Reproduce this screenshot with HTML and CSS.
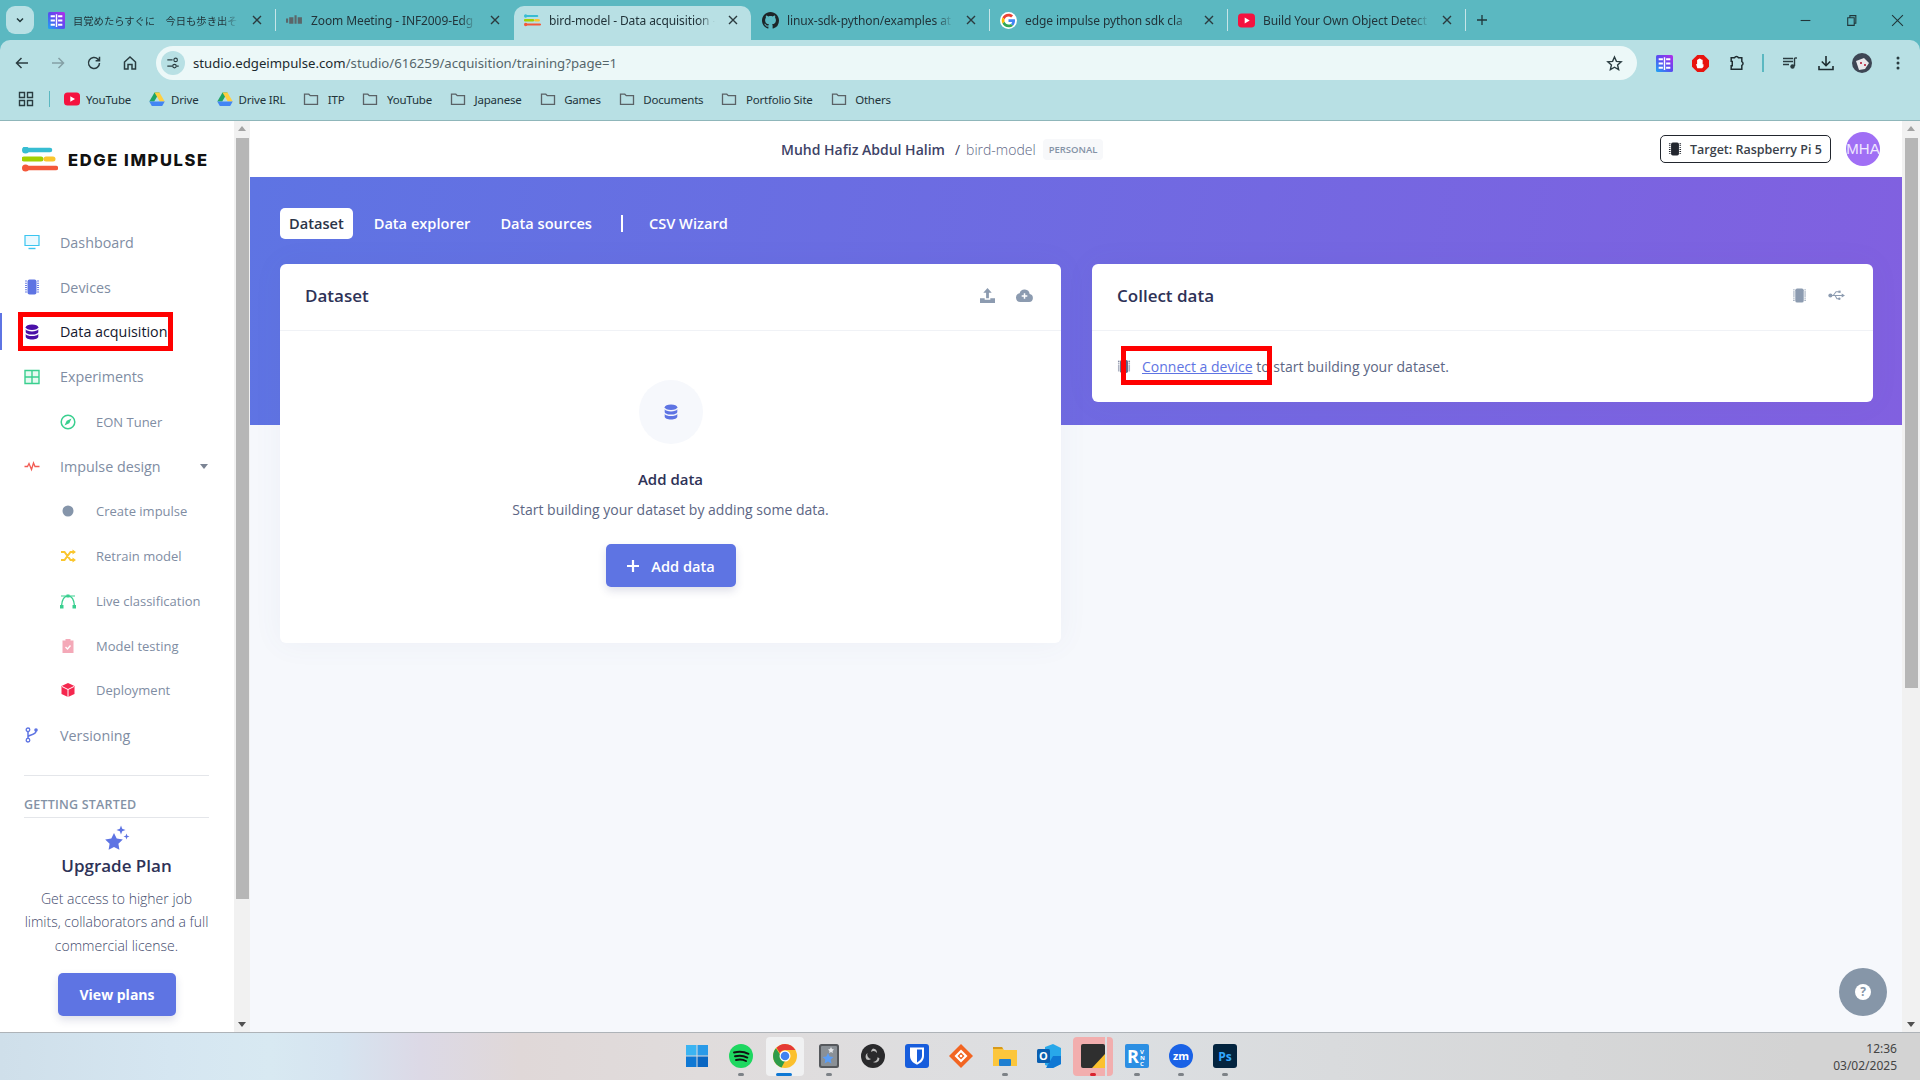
FILE: index.html
```html
<!DOCTYPE html>
<html lang="en">
<head>
    <meta charset="UTF-8">
    <meta name="viewport" content="width=device-width, initial-scale=1.0">
    <title>bird-model - Data acquisition - Edge Impulse</title>
    <link rel="stylesheet" href="styles.css">
</head>
<body>
<svg class="defs" aria-hidden="true">
    <defs>
        <linearGradient id="appgrad" x1="0" y1="1" x2="1" y2="0">
            <stop offset="0" stop-color="#1ea7f5"/>
            <stop offset="0.5" stop-color="#5a4cf0"/>
            <stop offset="1" stop-color="#b52bea"/>
        </linearGradient>
        <symbol id="i-app" viewBox="0 0 16 16">
            <rect width="16" height="16" rx="1.5" fill="url(#appgrad)"/>
            <path d="M2.5 3h4v2h-4zM2.5 7h4v2h-4zM2.5 11h4v2h-4zM9.500 3h4v2h-4zM9.500 7h4v2h-4zM9.500 11h4v2h-4zM7.300 2h1.400v12H7.300z" fill="#fff"/>
        </symbol>
        <symbol id="i-logo" viewBox="0 0 36 25">
            <path d="M3.500 3H28" stroke="#37bdd2" stroke-width="4.500" stroke-linecap="round"/>
            <circle cx="3.500" cy="3" r="3.500" fill="#37bdd2"/>
            <path d="M2 12h17" stroke="#a2d000" stroke-width="5" stroke-linecap="round"/>
            <path d="M24 12h7" stroke="#fac62d" stroke-width="5" stroke-linecap="round"/>
            <path d="M3.500 21H34" stroke="#f4583a" stroke-width="4.500" stroke-linecap="round"/>
            <circle cx="3.500" cy="21" r="3.500" fill="#f4583a"/>
        </symbol>
        <symbol id="i-chip" viewBox="0 0 16 16">
            <rect x="3.500" y="0.500" width="9" height="15" rx="2" fill="currentColor"/>
            <path d="M2 1.500v13M14 1.500v13" stroke="currentColor" stroke-width="1.800" stroke-dasharray="1 1.200" fill="none"/>
        </symbol>
        <symbol id="i-db" viewBox="0 0 16 16">
            <ellipse cx="8" cy="3.200" rx="6.300" ry="2.800" fill="currentColor"/>
            <path d="M1.700 5.300c.8 1.300 3.300 2.200 6.300 2.200s5.500-.9 6.300-2.200v2.600c0 1.500-2.800 2.600-6.300 2.600s-6.300-1.100-6.300-2.600zM1.700 9.900c.8 1.300 3.300 2.200 6.300 2.200s5.500-.9 6.300-2.200v2.800c0 1.500-2.800 2.700-6.300 2.700s-6.300-1.200-6.300-2.700z" fill="currentColor"/>
        </symbol>
        <symbol id="i-folder" viewBox="0 0 16 16">
            <path d="M1.500 3.200h4.300l1.500 1.500h7.200v8.600h-13z" fill="none" stroke="#5a6266" stroke-width="1.300"/>
        </symbol>
        <symbol id="i-yt" viewBox="0 0 16 16">
            <rect y="1.500" width="16" height="13" rx="3.500" fill="#f5123f"/>
            <path d="M6.300 5.200 11 8l-4.700 2.800z" fill="#fff"/>
        </symbol>
        <symbol id="i-drive" viewBox="0 0 16 16">
            <path d="M5.500 1.500h5L5.200 10.500H.3z" fill="#1fa463"/>
            <path d="M10.500 1.500 15.700 10.500H10.800L5.500 1.500z" fill="#ffcf3f"/>
            <path d="M3 10.500h12.700L13.200 15H2.800L.3 10.500z" fill="#4285f4"/>
        </symbol>
        <symbol id="i-close" viewBox="0 0 12 12">
            <path d="M2 2l8 8M10 2l-8 8" stroke="#2b3a3e" stroke-width="1.400" fill="none"/>
        </symbol>
    </defs>
</svg>

<div class="screen">
    <header class="browser">
        <div class="tabstrip">
            <div class="tab-list"><svg viewBox="0 0 12 12"><path d="M3 4.500l3 3 3-3" fill="none" stroke="#20363a" stroke-width="1.500"/></svg></div>
            <div class="tab">
                <svg class="favicon"><use href="#i-app"/></svg>
                <span class="tab-title cjk">目覚めたらすぐに　今日も歩き出そ</span>
                <svg class="tab-close"><use href="#i-close"/></svg>
            </div>
            <span class="tab-sep"></span>
            <div class="tab">
                <svg class="favicon" viewBox="0 0 16 16"><path d="M0 6h2v4H0zM3 5h4v6H3zM8 3h2v8H8zM11 5h4v6h-4z" fill="#5b6669"/></svg>
                <span class="tab-title">Zoom Meeting - INF2009-Edg</span>
                <svg class="tab-close"><use href="#i-close"/></svg>
            </div>
            <span class="tab-sep off"></span>
            <div class="tab active">
                <svg class="favicon"><use href="#i-logo"/></svg>
                <span class="tab-title">bird-model - Data acquisition -</span>
                <svg class="tab-close"><use href="#i-close"/></svg>
            </div>
            <span class="tab-sep off"></span>
            <div class="tab">
                <svg class="favicon" viewBox="0 0 16 16"><path fill="#1d2528" d="M8 0C3.580 0 0 3.580 0 8c0 3.540 2.290 6.530 5.470 7.590.4.070.55-.17.55-.38 0-.19-.01-.82-.01-1.490-2.010.37-2.530-.49-2.690-.94-.09-.23-.48-.94-.82-1.130-.28-.15-.68-.52-.01-.53.63-.01 1.080.58 1.230.82.72 1.210 1.870.87 2.330.66.07-.52.28-.87.51-1.070-1.780-.2-3.640-.89-3.640-3.950 0-.87.31-1.590.82-2.150-.08-.2-.36-1.020.08-2.120 0 0 .67-.21 2.200.82.64-.18 1.320-.27 2-.27.68 0 1.360.09 2 .27 1.530-1.040 2.200-.82 2.200-.82.44 1.100.16 1.920.08 2.120.51.56.82 1.270.82 2.150 0 3.070-1.870 3.750-3.650 3.950.29.25.54.73.54 1.480 0 1.070-.01 1.930-.01 2.200 0 .21.15.46.55.38A8.013 8.013 0 0016 8c0-4.420-3.580-8-8-8z"/></svg>
                <span class="tab-title">linux-sdk-python/examples at</span>
                <svg class="tab-close"><use href="#i-close"/></svg>
            </div>
            <span class="tab-sep"></span>
            <div class="tab">
                <svg class="favicon" viewBox="-6 -6 60 60">
                    <circle cx="24" cy="24" r="30" fill="#fff"/>
                    <path fill="#EA4335" d="M24 9.500c3.540 0 6.710 1.220 9.210 3.600l6.850-6.850C35.900 2.380 30.470 0 24 0 14.620 0 6.510 5.380 2.560 13.220l7.980 6.190C12.430 13.720 17.740 9.500 24 9.500z"/>
                    <path fill="#4285F4" d="M46.980 24.550c0-1.570-.15-3.090-.38-4.550H24v9.020h12.940c-.58 2.960-2.260 5.480-4.780 7.180l7.730 6c4.510-4.180 7.090-10.360 7.090-17.650z"/>
                    <path fill="#FBBC05" d="M10.530 28.590c-.48-1.450-.76-2.990-.76-4.590s.27-3.140.76-4.590l-7.980-6.190C.92 16.460 0 20.120 0 24c0 3.880.92 7.540 2.560 10.780l7.970-6.190z"/>
                    <path fill="#34A853" d="M24 48c6.480 0 11.930-2.130 15.890-5.810l-7.730-6c-2.150 1.450-4.920 2.300-8.160 2.300-6.260 0-11.570-4.220-13.470-9.910l-7.980 6.190C6.510 42.620 14.620 48 24 48z"/>
                </svg>
                <span class="tab-title">edge impulse python sdk cla</span>
                <svg class="tab-close"><use href="#i-close"/></svg>
            </div>
            <span class="tab-sep"></span>
            <div class="tab">
                <svg class="favicon"><use href="#i-yt"/></svg>
                <span class="tab-title">Build Your Own Object Detect</span>
                <svg class="tab-close"><use href="#i-close"/></svg>
            </div>
            <span class="tab-sep"></span>
            <svg class="new-tab" viewBox="0 0 12 12"><path d="M6 1v10M1 6h10" stroke="#20363a" stroke-width="1.300"/></svg>
            <div class="win-controls">
                <span class="win-btn"><svg viewBox="0 0 12 12"><path d="M1.500 6h9" stroke="#20363a"/></svg></span>
                <span class="win-btn"><svg viewBox="0 0 12 12"><path d="M2.500 3.500h6v7h-6zM4.500 3.500v-2h5.500v7H8.500" fill="none" stroke="#20363a"/></svg></span>
                <span class="win-btn"><svg viewBox="0 0 12 12"><path d="M1 1l10 10M11 1L1 11" stroke="#20363a"/></svg></span>
            </div>
        </div>

        <div class="toolbar">
            <span class="tb-btn"><svg viewBox="0 0 16 16"><path d="M14 8H3M7.500 3 2.500 8l5 5" fill="none" stroke="#2a3c40" stroke-width="1.500"/></svg></span>
            <span class="tb-btn"><svg viewBox="0 0 16 16"><path d="M2 8h11M8.500 3l5 5-5 5" fill="none" stroke="#84a0a5" stroke-width="1.500"/></svg></span>
            <span class="tb-btn"><svg viewBox="0 0 16 16"><path d="M13.500 8a5.500 5.500 0 1 1-1.600-3.900L13.500 5.700M13.500 1.800v3.900H9.600" fill="none" stroke="#2a3c40" stroke-width="1.500"/></svg></span>
            <span class="tb-btn"><svg viewBox="0 0 16 16"><path d="M2.500 7 8 2l5.500 5v7H10V9.500H6V14H2.500z" fill="none" stroke="#2a3c40" stroke-width="1.500"/></svg></span>
            <div class="omnibox">
                <span class="site-info"><svg viewBox="0 0 16 16"><path d="M1.500 4.500h6M12 11.500h2.500M1.500 11.500h6" stroke="#2a3c40" stroke-width="1.300"/><circle cx="11" cy="4.500" r="2" fill="none" stroke="#2a3c40" stroke-width="1.300"/><circle cx="9.700" cy="11.500" r="2" fill="none" stroke="#2a3c40" stroke-width="1.300"/></svg></span>
                <span class="url"><span class="host">studio.edgeimpulse.com</span>/studio/616259/acquisition/training?page=1</span>
                <svg class="star" viewBox="0 0 16 16"><path d="M8 1.800 9.800 6l4.500.4-3.400 3 1 4.400L8 11.500l-3.900 2.300 1-4.400-3.400-3L6.200 6z" fill="none" stroke="#2a3c40" stroke-width="1.300"/></svg>
            </div>
            <span class="tb-btn first-ext"><svg class="ext"><use href="#i-app"/></svg></span>
            <span class="tb-btn"><svg class="ext" viewBox="0 0 16 16"><path d="M5 0h6l5 5v6l-5 5H5l-5-5V5z" fill="#e8140f"/><path d="M5 12.500 3.800 8.500l1 .2V4.500h1V3.800h1v-.5h1v.5h1v.7h1.200v4.300h.8v2.200l-1.300 1.500z" fill="#fff"/></svg></span>
            <span class="tb-btn"><svg class="ext" viewBox="0 0 16 16"><path d="M3 2.500h3.200a2 2 0 0 1 3.600 0H13v3.700a2 2 0 0 1 0 3.600V13.500H3v-3.300h1V6H3z" fill="none" stroke="#1e2c30" stroke-width="1.400"/></svg></span>
            <span class="tb-sep"></span>
            <span class="tb-btn"><svg viewBox="0 0 16 16"><path d="M1 3.500h10M1 6.500h10M1 9.500h6" stroke="#2a3c40" stroke-width="1.400"/><path d="M12.500 3v8" stroke="#2a3c40" stroke-width="1.400"/><path d="M12.500 3H15" stroke="#2a3c40" stroke-width="1.400"/><circle cx="10.500" cy="11.500" r="2.200" fill="#2a3c40"/></svg></span>
            <span class="tb-btn"><svg viewBox="0 0 16 16"><path d="M8 1v9.500M3.800 6.500 8 10.700l4.200-4.200M1 11v3.500h14V11" fill="none" stroke="#1e2c30" stroke-width="1.600"/></svg></span>
            <span class="tb-btn"><svg class="avatar-chrome" viewBox="0 0 20 20"><circle cx="10" cy="10" r="10" fill="#3d4654"/><path d="M4 8l8-3 5 5-4 6-6 1z" fill="#e9e9ec"/><path d="M8 9h2v2H8zM12 11h2v2h-2z" fill="#c0455b"/></svg></span>
            <span class="tb-btn"><svg viewBox="0 0 16 16"><circle cx="8" cy="3" r="1.500" fill="#2a3c40"/><circle cx="8" cy="8" r="1.500" fill="#2a3c40"/><circle cx="8" cy="13" r="1.500" fill="#2a3c40"/></svg></span>
        </div>

        <nav class="bookmarks">
            <svg class="apps" viewBox="0 0 16 16"><path d="M1.500 1.500h5v5h-5zM9.500 1.500h5v5h-5zM1.500 9.500h5v5h-5zM9.500 9.500h5v5h-5z" fill="none" stroke="#2a3c40" stroke-width="1.400"/></svg>
            <span class="bm-sep"></span>
            <a class="bookmark site"><svg><use href="#i-yt"/></svg>YouTube</a>
            <a class="bookmark site"><svg><use href="#i-drive"/></svg>Drive</a>
            <a class="bookmark site"><svg><use href="#i-drive"/></svg>Drive IRL</a>
            <a class="bookmark"><svg><use href="#i-folder"/></svg>ITP</a>
            <a class="bookmark"><svg><use href="#i-folder"/></svg>YouTube</a>
            <a class="bookmark"><svg><use href="#i-folder"/></svg>Japanese</a>
            <a class="bookmark"><svg><use href="#i-folder"/></svg>Games</a>
            <a class="bookmark"><svg><use href="#i-folder"/></svg>Documents</a>
            <a class="bookmark"><svg><use href="#i-folder"/></svg>Portfolio Site</a>
            <a class="bookmark"><svg><use href="#i-folder"/></svg>Others</a>
        </nav>
    </header>

    <div class="page">
        <aside class="sidebar">
            <div class="brand">
                <svg class="brand-logo"><use href="#i-logo"/></svg>
                <span class="brand-name">EDGE IMPULSE</span>
            </div>
            <ul class="nav">
                <li class="nav-item"><svg viewBox="0 0 16 16"><path d="M1 1.500h14v10H1z" fill="#eaf9ff" stroke="#3bc5f0" stroke-width="1.200"/><path d="M4.500 14.500h7" stroke="#3bc5f0" stroke-width="1.400"/></svg>Dashboard</li>
                <li class="nav-item"><svg class="chip-blue"><use href="#i-chip"/></svg>Devices</li>
                <li class="nav-item current"><svg class="db-purple"><use href="#i-db"/></svg>Data acquisition</li>
                <li class="nav-item"><svg viewBox="0 0 16 16"><path d="M1 1.500h14v13H1zM8 1.500v13M1 8h14" fill="#e6faf1" stroke="#39cf8f" stroke-width="1.400"/></svg>Experiments</li>
                <li class="nav-item sub"><svg viewBox="0 0 16 16"><circle cx="8" cy="8" r="6.800" fill="none" stroke="#39cf8f" stroke-width="1.500"/><path d="M11.500 4.500 9.300 9.300 4.500 11.500 6.700 6.700z" fill="#39cf8f"/></svg>EON Tuner</li>
                <li class="nav-item"><svg viewBox="0 0 16 16"><path d="M0.500 8.500h3l1.500-3 2.500 6 2-6.500 1.500 3.500h4.500" fill="none" stroke="#f25c54" stroke-width="1.300"/></svg>Impulse design<span class="caret"></span></li>
                <li class="nav-item sub"><svg viewBox="0 0 16 16"><circle cx="8" cy="8" r="5.500" fill="#8595aa"/></svg>Create impulse</li>
                <li class="nav-item sub"><svg viewBox="0 0 16 16"><path d="M1 4h3.500l6 8H13M1 12h3.500l6-8H13" fill="none" stroke="#fac62d" stroke-width="2"/><path d="M12.500 1.500 16 4l-3.500 2.500zM12.500 9.500 16 12l-3.500 2.500z" fill="#fac62d"/></svg>Retrain model</li>
                <li class="nav-item sub"><svg viewBox="0 0 16 16"><path d="M1.500 13C2 6 5 3 8 3s6 3 6.500 10" fill="none" stroke="#39cf8f" stroke-width="1.300"/><path d="M0 12h3.500v3.500H0zM12.500 12H16v3.500h-3.500zM6.500 1.500h3v3h-3z" fill="#39cf8f"/><path d="M1 3h14" stroke="#39cf8f" stroke-width="1"/></svg>Live classification</li>
                <li class="nav-item sub"><svg viewBox="0 0 16 16"><path d="M2.500 2.500H5.500V1h5v1.500h3V15h-11z" fill="#f4a9b8"/><path d="M5.500 9l2 2 3-3.500" fill="none" stroke="#fff" stroke-width="1.400"/></svg>Model testing</li>
                <li class="nav-item sub"><svg viewBox="0 0 16 16"><path d="M8 1l6.500 3v8L8 15l-6.500-3V4z" fill="#f5274e"/><path d="M2 4.500l6 3 6-3M8 7.500V15" fill="none" stroke="#fff" stroke-width="1"/></svg>Deployment</li>
                <li class="nav-item"><svg viewBox="0 0 16 16"><path d="M4 3v10M4 10c0-2.500 8-1.500 8-6" fill="none" stroke="#5e74e3" stroke-width="1.500"/><circle cx="4" cy="2.800" r="1.800" fill="#fff" stroke="#5e74e3" stroke-width="1.300"/><circle cx="4" cy="13.200" r="1.800" fill="#fff" stroke="#5e74e3" stroke-width="1.300"/><circle cx="12" cy="3" r="1.800" fill="#5e74e3"/></svg>Versioning</li>
            </ul>
            <div class="started">
                <h6>GETTING STARTED</h6>
                <svg class="sparkle" viewBox="0 0 26 26"><path d="M10 8l2.700 5.600 6.100.8-4.400 4.300 1 6.100L10 22l-5.400 2.800 1-6.100L1.200 14.400l6.100-.8z" fill="#5e74e3"/><path d="M17 .5l1.200 3.300 3.300 1.200-3.300 1.200L17 9.500l-1.200-3.300L12.500 5l3.300-1.200zM22.500 8.500l.8 2.200 2.200.8-2.200.8-.8 2.200-.8-2.200-2.200-.8 2.200-.8z" fill="#5e74e3"/></svg>
                <h4>Upgrade Plan</h4>
                <p>Get access to higher job<br>limits, collaborators and a full<br>commercial license.</p>
                <a class="btn-plans">View plans</a>
            </div>
        </aside>
        <div class="scrollbar side">
            <span class="arrow up"></span>
            <span class="thumb"></span>
            <span class="arrow down"></span>
        </div>

        <main class="content">
            <div class="topbar">
                <span class="owner">Muhd Hafiz Abdul Halim</span>
                <span class="slash">/</span>
                <span class="project">bird-model</span>
                <span class="pill">PERSONAL</span>
                <span class="target"><svg><use href="#i-chip"/></svg>Target: Raspberry Pi 5</span>
                <span class="avatar">MHA</span>
            </div>
            <section class="hero">
                <div class="subnav">
                    <a class="subnav-link on">Dataset</a>
                    <a class="subnav-link">Data explorer</a>
                    <a class="subnav-link">Data sources</a>
                    <span class="subnav-sep"></span>
                    <a class="subnav-link">CSV Wizard</a>
                </div>
                <div class="cards">
                    <div class="card">
                        <div class="card-head">
                            <h3>Dataset</h3>
                            <div class="card-tools">
                                <svg viewBox="0 0 16 16"><path d="M8 0l4.500 5H9.500v6h-3V5H3.500zM0 11h5v1.500h6V11h5v5H0z"/></svg>
                                <svg viewBox="0 0 18 16"><path d="M14.500 6.500a5.500 5.500 0 0 0-10.700-1A4.800 4.800 0 0 0 4.500 15h9.500a4.300 4.300 0 0 0 .5-8.500z"/><path d="M9 5.500v6M6 8.500h6" stroke="#fff" stroke-width="1.600"/></svg>
                            </div>
                        </div>
                        <div class="empty">
                            <span class="empty-icon"><svg><use href="#i-db"/></svg></span>
                            <h4>Add data</h4>
                            <p>Start building your dataset by adding some data.</p>
                            <a class="btn-add"><svg viewBox="0 0 14 14"><path d="M7 1v12M1 7h12" stroke="#fff" stroke-width="2.200"/></svg>Add data</a>
                        </div>
                    </div>
                    <div class="card">
                        <div class="card-head">
                            <h3>Collect data</h3>
                            <div class="card-tools">
                                <svg><use href="#i-chip"/></svg>
                                <svg viewBox="0 0 18 16"><circle cx="2.500" cy="8" r="2.200"/><path d="M2.500 8h12.500M5.500 8l3-4h3M7.500 8l2 3.500h2" fill="none" stroke="#8c9bb0" stroke-width="1.100"/><path d="M14.500 5.800 18 8l-3.500 2.200z"/><rect x="11" y="2.800" width="2.400" height="2.400"/><circle cx="12" cy="11.500" r="1.300"/></svg>
                            </div>
                        </div>
                        <div class="connect">
                            <svg><use href="#i-chip"/></svg>
                            <span><a class="link">Connect a device</a> to start building your dataset.</span>
                        </div>
                    </div>
                </div>
            </section>
            <span class="help"><svg viewBox="0 0 16 16"><circle cx="8" cy="8" r="8" fill="#fff"/><text x="8" y="12" class="help-mark">?</text></svg></span>
        </main>
        <div class="scrollbar main">
            <span class="arrow up"></span>
            <span class="thumb"></span>
            <span class="arrow down"></span>
        </div>
    </div>

    <footer class="taskbar">
        <div class="task-icons">
            <span class="task"><svg viewBox="0 0 24 24"><path d="M1 1h10.500v10.500H1z" fill="#3bb4f2"/><path d="M12.500 1H23v10.500H12.500z" fill="#2a9ae8"/><path d="M1 12.500h10.500V23H1z" fill="#0f78d4"/><path d="M12.500 12.500H23V23H12.500z" fill="#0a66c2"/></svg></span>
            <span class="task open"><svg viewBox="0 0 24 24"><circle cx="12" cy="12" r="12" fill="#1ed760"/><path d="M5 8.500c5-1.300 10-1 14.500 1.300M6 12.300c4.300-1 8.600-.7 12.300 1.300M7 16c3.500-.8 7-.6 10 1" fill="none" stroke="#111" stroke-width="1.900" stroke-linecap="round"/></svg></span>
            <span class="task open running"><svg viewBox="0 0 24 24"><circle cx="12" cy="12" r="12" fill="#fbc02d"/><path d="M12 0a12 12 0 0 1 10.400 6H12a6 6 0 0 0-5.200 3L3.500 3.800A12 12 0 0 1 12 0z" fill="#e53935"/><path d="M2.900 4.300 8 12a4 4 0 0 0 4 5l-3.500 6.500A12 12 0 0 1 2.900 4.300z" fill="#2e9c4b"/><circle cx="12" cy="12" r="5.500" fill="#fff"/><circle cx="12" cy="12" r="4.300" fill="#3f83f0"/></svg></span>
            <span class="task open"><svg viewBox="0 0 24 24"><rect x="2" y="0" width="20" height="24" rx="2.500" fill="#55585c"/><rect x="4" y="2" width="16" height="20" rx="1" fill="#8a9096"/><path d="M8 12l1.700 3.500 3.800.5-2.800 2.600.7 3.800L8 20.600l-3.400 1.800.7-3.800L2.500 16l3.800-.5z" fill="#5b9df5" transform="translate(3 -3)"/><path d="M14 3l1 2 2 .4-1.500 1.500.4 2L14 8l-1.900.9.400-2L11 5.400l2-.4z" fill="#e3e6ea"/></svg></span>
            <span class="task"><svg viewBox="0 0 24 24"><circle cx="12" cy="12" r="12" fill="#2a2a2c"/><path d="M12 4.500a4.500 4.500 0 0 1 4 4.500 4.500 4.500 0 0 0-6-1 4.500 4.500 0 0 1 2-3.500zM5.500 15.500a4.500 4.500 0 0 1 1-6.500 4.500 4.500 0 0 0 3.500 6 4.500 4.500 0 0 1-4.500.5zM18.500 14.500a4.500 4.500 0 0 1-6.500 3.500 4.500 4.500 0 0 0 4.500-4.800 4.500 4.500 0 0 1 2 1.300z" fill="#bdbdbd"/></svg></span>
            <span class="task"><svg viewBox="0 0 24 24"><rect width="24" height="24" rx="3" fill="#175ddc"/><path d="M5 3.500h14V12c0 4.500-3.500 7-7 8.800C8.500 19 5 16.500 5 12z" fill="#fff"/><path d="M12 5.500h5V12c0 3-2.500 5-5 6.400z" fill="#175ddc"/></svg></span>
            <span class="task"><svg viewBox="0 0 24 24"><path d="M12 0l12 12-12 12L0 12z" fill="#f26522"/><path d="M12 5.500l6.500 6.500-6.500 6.500L5.500 12z" fill="#fff"/><path d="M12 8.500l3.500 3.500-3.500 3.500L8.500 12z" fill="#f26522"/><circle cx="12" cy="12" r="1.300" fill="#fff"/></svg></span>
            <span class="task open"><svg viewBox="0 0 24 24"><path d="M0 3h9l2 3h13v16H0z" fill="#fcc63c"/><path d="M0 3h9l1 2H0z" fill="#d99a1a"/><rect x="6" y="15" width="12" height="7" rx="1" fill="#1f7fd1"/></svg></span>
            <span class="task"><svg viewBox="0 0 24 24"><path d="M8 3l8-3 8 4v16l-8 4-8-3z" fill="#28a8ea"/><path d="M16 12h8v8l-8 4H9z" fill="#0f78d4"/><rect y="5" width="13" height="14" rx="1.500" fill="#0a5fb0"/><text x="6.500" y="16" class="outlook-mark">O</text></svg></span>
            <span class="task open alert"><svg viewBox="0 0 24 24"><rect width="24" height="24" rx="2" fill="#2f2f2f"/><path d="M24 10v14H11z" fill="#fcc12d"/></svg></span>
            <span class="task open"><svg viewBox="0 0 24 24"><rect width="24" height="24" rx="2" fill="#2c8fe3"/><text x="2" y="19" class="rvnc-mark">R</text><text x="15" y="10" class="rvnc-small">V</text><text x="15" y="16" class="rvnc-small">N</text><text x="15" y="22" class="rvnc-small">C</text></svg></span>
            <span class="task open"><svg viewBox="0 0 24 24"><circle cx="12" cy="12" r="12" fill="#1a62e6"/><text x="12" y="16" class="zm-mark">zm</text></svg></span>
            <span class="task open"><svg viewBox="0 0 24 24"><rect width="24" height="24" rx="3" fill="#03243f"/><text x="12" y="17" class="ps-mark">Ps</text></svg></span>
        </div>
        <div class="clock">12:36<br>03/02/2025</div>
    </footer>

    <div class="callout callout-nav"></div>
    <div class="callout callout-connect"></div>
</div>
</body>
</html>
```

FILE: styles.css
```css
* {
    box-sizing: border-box;
}
body {
    margin: 0;
    font-family: 'Open Sans', sans-serif;
    font-size: 14px;
    color: #5c6684;
}
h3, h4, h6, p, ul {
    margin: 0;
    padding: 0;
}
.defs {
    position: absolute;
    width: 0;
    height: 0;
}
.screen {
    position: relative;
    width: 1920px;
    height: 1080px;
    overflow: hidden;
    display: flex;
    flex-direction: column;
}

/* browser chrome */
.browser {
    height: 121px;
    flex: none;
    background: #5bb8c1;
    border-bottom: 1px solid #8fb6ba;
    font-family: 'Noto Sans', 'Noto Sans CJK JP', sans-serif;
    color: #22343a;
}
.tabstrip {
    height: 40px;
    padding: 6px 0 0 6px;
    display: flex;
    align-items: flex-start;
}
.tab-list {
    width: 28px;
    height: 28px;
    margin-right: 4px;
    border-radius: 9px;
    background: #b8e0e4;
    display: flex;
    align-items: center;
    justify-content: center;
}
.tab-list svg {
    width: 12px;
    height: 12px;
}
.tab {
    width: 237px;
    height: 28px;
    padding: 0 6px 0 10px;
    display: flex;
    align-items: center;
    font-size: 12px;
    letter-spacing: -0.1px;
    flex: none;
}
.tab.active {
    height: 34px;
    padding-bottom: 6px;
    background: #b8e0e4;
    border-radius: 10px 10px 0 0;
}
.favicon {
    width: 17px;
    height: 17px;
    flex: none;
}
.tab-title {
    flex: 1;
    min-width: 0;
    margin-left: 8px;
    white-space: nowrap;
    overflow: hidden;
    -webkit-mask-image: linear-gradient(to right, #000 90%, transparent);
    mask-image: linear-gradient(to right, #000 90%, transparent);
}
.tab-title.cjk {
    font-size: 10.3px;
    letter-spacing: 0;
}
.tab-close {
    width: 12px;
    height: 12px;
    margin: 0 6px 0 12px;
    flex: none;
}
.tab-sep {
    width: 1px;
    height: 22px;
    margin-top: 3px;
    background: #c7e5e8;
    flex: none;
}
.tab-sep.off {
    background: transparent;
}
.new-tab {
    width: 12px;
    height: 12px;
    margin: 8px 0 0 10px;
    flex: none;
}
.win-controls {
    margin-left: auto;
    margin-top: -6px;
    display: flex;
}
.win-btn {
    width: 46px;
    height: 40px;
    display: flex;
    align-items: center;
    justify-content: center;
}
.win-btn svg {
    width: 13px;
    height: 13px;
}
.toolbar {
    height: 40px;
    padding: 6px 0 0 4px;
    display: flex;
    align-items: center;
    background: #b8e0e4;
    border-radius: 10px 10px 0 0;
}
.tb-btn {
    width: 36px;
    height: 34px;
    display: flex;
    align-items: center;
    justify-content: center;
    flex: none;
}
.tb-btn svg {
    width: 16px;
    height: 16px;
}
.tb-btn .ext {
    width: 17px;
    height: 17px;
}
.tb-btn .avatar-chrome {
    width: 20px;
    height: 20px;
}
.first-ext {
    margin-left: 9px;
}
.tb-sep {
    width: 2px;
    height: 18px;
    margin: 0 8px;
    background: #5bb8c1;
    flex: none;
}
.omnibox {
    width: 1481px;
    height: 34px;
    margin-left: 8px;
    padding: 0 14px 0 5px;
    display: flex;
    align-items: center;
    background: #ecf8f8;
    border-radius: 17px;
    flex: none;
}
.site-info {
    width: 24px;
    height: 24px;
    border-radius: 50%;
    background: #b8e0e4;
    display: flex;
    align-items: center;
    justify-content: center;
}
.site-info svg {
    width: 14px;
    height: 14px;
}
.url {
    margin-left: 8px;
    font-size: 13.2px;
    color: #55666b;
}
.host {
    color: #1c2a2e;
}
.star {
    width: 17px;
    height: 17px;
    margin-left: auto;
}
.bookmarks {
    height: 40px;
    background: #b8e0e4;
    padding: 0 0 2px 18px;
    display: flex;
    align-items: center;
    font-size: 11.5px;
    letter-spacing: -0.2px;
}
.apps {
    width: 16px;
    height: 16px;
    margin-right: 15px;
}
.bm-sep {
    width: 1px;
    height: 16px;
    background: #5bb8c1;
    margin-right: 14px;
}
.bookmark {
    display: flex;
    align-items: center;
    margin-right: 18px;
    white-space: nowrap;
}
.bookmark svg {
    width: 16px;
    height: 16px;
    margin-right: 8.5px;
}
.bookmark.site svg {
    margin-right: 6px;
}

/* page */
.page {
    height: 911px;
    display: flex;
    flex: none;
}
.sidebar {
    width: 234px;
    flex: none;
    background: #fff;
}
.brand {
    height: 99px;
    padding: 26px 0 0 22px;
    display: flex;
    align-items: flex-start;
}
.brand-logo {
    width: 36px;
    height: 25px;
}
.brand-name {
    margin-left: 10px;
    font-family: Inter, sans-serif;
    font-weight: 800;
    font-size: 16.5px;
    line-height: 26px;
    letter-spacing: 1.6px;
    color: #111;
}
.nav {
    list-style: none;
}
.nav-item {
    height: 44.8px;
    padding-left: 24px;
    display: flex;
    align-items: center;
    color: #808da3;
    font-size: 14.3px;
}
.nav-item svg {
    width: 16px;
    height: 16px;
    margin-right: 20px;
    flex: none;
}
.nav-item.sub {
    padding-left: 60px;
    font-size: 13px;
}
.nav-item.current {
    color: #14172e;
    background: linear-gradient(#5e74e3, #5e74e3) no-repeat 0 center / 2px 37px;
}
.chip-blue {
    color: #5e74e3;
}
.db-purple {
    color: #4a10a8;
}
.caret {
    width: 0;
    height: 0;
    margin-left: auto;
    margin-right: 26px;
    border-left: 4.5px solid transparent;
    border-right: 4.5px solid transparent;
    border-top: 5px solid #7b8494;
}
.started {
    margin: 17px 25px 0 24px;
    border-top: 1px solid #e4e6ea;
    text-align: center;
}
.started h6 {
    height: 42px;
    line-height: 57px;
    border-bottom: 1px solid #e4e6ea;
    font-size: 12.5px;
    font-weight: 600;
    letter-spacing: 0.2px;
    color: #8492a6;
    text-align: left;
}
.sparkle {
    display: block;
    width: 26px;
    height: 26px;
    margin: 7px auto 0;
}
.started h4 {
    margin-top: 3px;
    font-size: 17px;
    line-height: 24px;
    font-weight: 600;
    color: #2e3257;
}
.started p {
    margin-top: 9px;
    line-height: 23.5px;
    font-weight: 300;
    color: #3f4a6c;
}
.btn-plans {
    display: block;
    width: 118px;
    height: 43px;
    margin: 16px auto 0 34px;
    border-radius: 5px;
    background: #5e74e3;
    box-shadow: 0 4px 8px rgba(40, 50, 110, 0.15);
    color: #fff;
    font-weight: 700;
    line-height: 43px;
}
.scrollbar {
    flex: none;
    display: flex;
    flex-direction: column;
    align-items: center;
    background: #f1f1f1;
}
.scrollbar.side {
    width: 16px;
}
.scrollbar.main {
    width: 18px;
}
.arrow {
    width: 0;
    height: 0;
    flex: none;
    border-left: 4.5px solid transparent;
    border-right: 4.5px solid transparent;
}
.arrow.up {
    margin-top: 5px;
    border-bottom: 5px solid #a3a3a3;
}
.arrow.down {
    margin-top: auto;
    margin-bottom: 5px;
    border-top: 5px solid #505050;
}
.thumb {
    width: 13px;
    margin-top: 7px;
    background: #b6b6b6;
}
.side .thumb {
    height: 761px;
}
.main .thumb {
    height: 550px;
}

.content {
    position: relative;
    flex: 1;
    min-width: 0;
    background: #f6f8fc;
}
.topbar {
    height: 56px;
    padding: 0 22px 0 531px;
    display: flex;
    align-items: center;
    background: #fff;
}
.owner {
    font-weight: 600;
    color: #3d4266;
}
.slash {
    margin: 0 6px 0 10px;
    color: #3d4266;
}
.project {
    color: #5c6684;
    font-weight: 300;
}
.pill {
    margin-left: 7px;
    padding: 0 6px;
    height: 21px;
    border-radius: 4px;
    background: #f7f8fa;
    color: #8492a6;
    font-size: 9.5px;
    font-weight: 600;
    line-height: 22px;
}
.target {
    margin-left: auto;
    width: 171px;
    height: 28px;
    padding-left: 7px;
    display: flex;
    align-items: center;
    border: 1px solid #22262e;
    border-radius: 5px;
    color: #3a3f4a;
    font-size: 12.5px;
    font-weight: 600;
}
.target svg {
    width: 14px;
    height: 14px;
    margin-right: 8px;
    color: #22262e;
}
.avatar {
    width: 34px;
    height: 34px;
    margin-left: 15px;
    border-radius: 50%;
    background: #a06ff5;
    color: #f0e8ff;
    font-family: 'Liberation Sans', sans-serif;
    font-size: 15px;
    line-height: 34px;
    text-align: center;
    white-space: nowrap;
}
.hero {
    height: 248px;
    padding: 31px 29px 0 30px;
    background: linear-gradient(100deg, #5e74e3, #8160e0);
}
.subnav {
    height: 31px;
    display: flex;
    align-items: center;
    gap: 12px;
}
.subnav-link {
    padding: 0 9px;
    height: 31px;
    line-height: 31px;
    border-radius: 5px;
    color: #fff;
    font-size: 14.6px;
    font-weight: 600;
}
.subnav-link.on {
    background: #fff;
    color: #2b3448;
}
.subnav-sep {
    width: 2px;
    height: 17px;
    margin: 0 5px 0 8px;
    background: #fff;
}
.cards {
    margin-top: 25px;
    display: grid;
    grid-template-columns: 781px 781px;
    gap: 31px;
    align-items: start;
}
.card {
    background: #fff;
    border-radius: 6px;
    box-shadow: 0 0 30px rgba(90, 100, 160, 0.06);
}
.card-head {
    height: 67px;
    padding: 0 28px 3px 25px;
    display: flex;
    align-items: center;
    justify-content: space-between;
    border-bottom: 1px solid #f0f2f6;
}
.card-head h3 {
    font-size: 17px;
    font-weight: 600;
    color: #2e3257;
}
.card-tools {
    display: flex;
    gap: 20px;
    color: #8c9bb0;
    fill: #8c9bb0;
}
.card-tools svg {
    width: 17px;
    height: 15px;
}
.empty {
    padding: 49px 0 56px;
    display: flex;
    flex-direction: column;
    align-items: center;
}
.empty-icon {
    width: 64px;
    height: 64px;
    border-radius: 50%;
    background: #f6f8fc;
    display: flex;
    align-items: center;
    justify-content: center;
    color: #5e74e3;
}
.empty-icon svg {
    width: 16px;
    height: 16px;
}
.empty h4 {
    margin-top: 25px;
    font-size: 15px;
    line-height: 20px;
    font-weight: 600;
    color: #2e3257;
}
.empty p {
    margin-top: 11px;
    line-height: 20px;
}
.btn-add {
    width: 130px;
    height: 43px;
    margin-top: 24px;
    display: flex;
    align-items: center;
    justify-content: center;
    border-radius: 5px;
    background: #5e74e3;
    box-shadow: 0 4px 8px rgba(40, 50, 110, 0.15);
    color: #fff;
    font-size: 14.6px;
    font-weight: 600;
}
.btn-add svg {
    width: 14px;
    height: 14px;
    margin-right: 11px;
}
.connect {
    height: 71px;
    padding-left: 25px;
    display: flex;
    align-items: center;
}
.connect svg {
    width: 14px;
    height: 15px;
    margin-right: 11px;
    color: #5c6684;
}
.link {
    color: #5e74e3;
    text-decoration: underline;
}
.help {
    position: absolute;
    right: 15px;
    bottom: 16px;
    width: 48px;
    height: 48px;
    border-radius: 50%;
    background: #8696a8;
    display: flex;
    align-items: center;
    justify-content: center;
}
.help svg {
    width: 16px;
    height: 16px;
}
.help-mark {
    font-family: 'Open Sans', sans-serif;
    font-size: 12px;
    font-weight: 700;
    fill: #8696a8;
    text-anchor: middle;
}

/* taskbar */
.taskbar {
    flex: 1;
    padding-left: 675px;
    display: flex;
    align-items: flex-start;
    border-top: 1px solid #aeb3b8;
    background: linear-gradient(to right, #cfdfea 0, #d5e6f1 170px, #d8e9f2 270px, #d6e4f0 340px, #dcd9e6 420px, #e0d8d8 520px, #e0dcdc 700px, #dcdfe2 1100px, #d3d3d3 1800px);
}
.task-icons {
    display: flex;
}
.task {
    position: relative;
    width: 44px;
    height: 45px;
    display: flex;
    align-items: center;
    justify-content: center;
}
.task svg {
    width: 24px;
    height: 24px;
    position: relative;
}
.task.open::after {
    content: "";
    position: absolute;
    left: 19px;
    bottom: 2px;
    width: 6px;
    height: 3px;
    border-radius: 2px;
    background: #7d8287;
}
.task.running::before {
    content: "";
    position: absolute;
    left: 3px;
    top: 4px;
    width: 38px;
    height: 39px;
    border-radius: 4px;
    background: #f0f1f2;
}
.task.running::after {
    left: 13px;
    width: 16px;
    background: #0f78d4;
}
.task.alert::before {
    content: "";
    position: absolute;
    left: 2px;
    top: 4px;
    width: 40px;
    height: 39px;
    border-radius: 4px;
    background: linear-gradient(to right, #f2aeae 32px, transparent 32px, transparent 34px, #f2aeae 34px);
}
.task.alert::after {
    background: #d9232e;
}
.outlook-mark, .rvnc-mark, .rvnc-small, .zm-mark, .ps-mark {
    font-family: 'Open Sans', sans-serif;
    font-weight: 700;
    fill: #fff;
}
.outlook-mark {
    font-size: 11px;
    text-anchor: middle;
}
.rvnc-mark {
    font-size: 18px;
}
.rvnc-small {
    font-size: 6px;
}
.zm-mark {
    font-size: 11px;
    text-anchor: middle;
}
.ps-mark {
    font-size: 12px;
    text-anchor: middle;
    fill: #31a8ff;
}
.clock {
    margin-left: auto;
    margin-top: 7px;
    padding-right: 23px;
    font-family: 'Noto Sans', sans-serif;
    font-size: 12px;
    line-height: 17px;
    text-align: right;
    color: #444;
}

/* red marker boxes drawn over the screenshot */
.callout {
    position: absolute;
    border: 5px solid #f00;
}
.callout-nav {
    left: 18px;
    top: 312px;
    width: 155px;
    height: 39px;
}
.callout-connect {
    left: 1121px;
    top: 346px;
    width: 151px;
    height: 39px;
}
```
